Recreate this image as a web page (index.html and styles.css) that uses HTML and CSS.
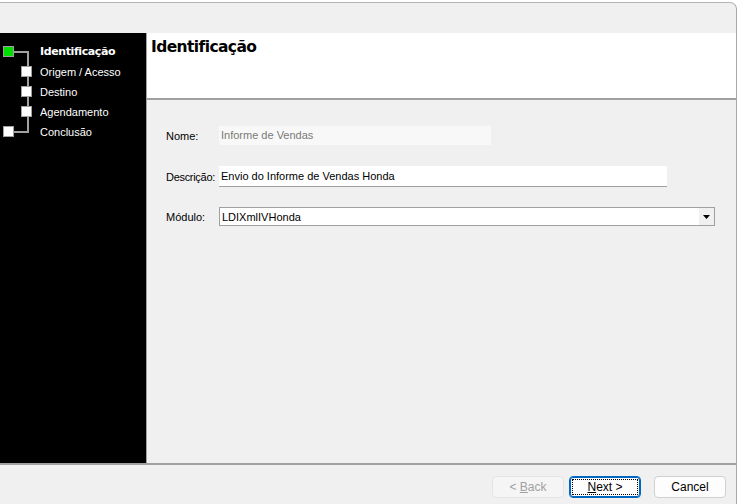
FILE: index.html
```html
<!DOCTYPE html>
<html>
<head>
<meta charset="utf-8">
<link rel="stylesheet" href="styles.css">
</head>
<body>
<div class="window">
  <div class="titlebar"></div>
  <div class="main">
    <aside class="sidebar">
      <svg class="tree" width="36" height="100" viewBox="0 0 36 100">
        <path d="M14 10 H28 V90 H14" fill="none" stroke="#a0a0a0" stroke-width="2"/>
        <rect x="3.5" y="4.5" width="10" height="10" fill="#00e000" stroke="#a0a0a0"/>
        <rect x="21.5" y="24.5" width="10" height="10" fill="#fff" stroke="#a0a0a0"/>
        <rect x="21.5" y="44.5" width="10" height="10" fill="#fff" stroke="#a0a0a0"/>
        <rect x="21.5" y="64.5" width="10" height="10" fill="#fff" stroke="#a0a0a0"/>
        <rect x="3.5" y="84.5" width="10" height="10" fill="#fff" stroke="#a0a0a0"/>
      </svg>
      <ul class="steps">
        <li class="active">Identificação</li>
        <li>Origem / Acesso</li>
        <li>Destino</li>
        <li>Agendamento</li>
        <li>Conclusão</li>
      </ul>
    </aside>
    <section class="content">
      <div class="header"><h1>Identificação</h1></div>
      <div class="form">
        <div class="row row-nome">
          <label>Nome:</label>
          <div class="field disabled">Informe de Vendas</div>
        </div>
        <div class="row row-desc">
          <label>Descrição:</label>
          <div class="field text">Envio do Informe de Vendas Honda</div>
        </div>
        <div class="row row-mod">
          <label>Módulo:</label>
          <div class="field combo"><span>LDIXmlIVHonda</span><span class="drop"><svg width="7" height="4" viewBox="0 0 7 4"><path d="M0 0H7L3.5 4Z" fill="#000"/></svg></span></div>
        </div>
      </div>
    </section>
  </div>
  <div class="footer">
    <button class="btn back" disabled>&lt; <u>B</u>ack</button>
    <button class="btn next"><span class="focus"><u>N</u>ext &gt;</span></button>
    <button class="btn cancel">Cancel</button>
  </div>
</div>
</body>
</html>
```
FILE: styles.css
```css
html, body {
  margin: 0;
  padding: 0;
  background: #ffffff;
}
body {
  width: 737px;
  height: 504px;
  overflow: hidden;
  font-family: "Liberation Sans", Arial, sans-serif;
  font-size: 11px;
  color: #000;
}
.window {
  margin-top: 2px;
  height: 502px;
  box-sizing: border-box;
  background: #f0f0f0;
  border-top: 1px solid #b4b4b4;
  border-right: 1px solid #a8a8a8;
  border-top-right-radius: 7px;
  display: flex;
  flex-direction: column;
}
.titlebar {
  height: 30px;
  flex: none;
}
.main {
  height: 432px;
  flex: none;
  display: flex;
  border-bottom: 2px solid #a0a0a0;
  box-sizing: border-box;
}
.sidebar {
  width: 147px;
  flex: none;
  box-sizing: border-box;
  background: #000;
  border-right: 1px solid #a0a0a0;
  display: flex;
  padding-top: 9px;
  align-items: flex-start;
}
.tree {
  display: block;
  flex: none;
  width: 36px;
  height: 100px;
  margin-right: 4px;
}
.steps {
  list-style: none;
  margin: 0;
  padding: 0;
  color: #fff;
  font-size: 11px;
}
.steps li {
  height: 20px;
  line-height: 20px;
}
.steps li.active {
  font-family: "DejaVu Sans", sans-serif;
  font-weight: bold;
  font-size: 11px;
  letter-spacing: -0.4px;
}
.content {
  flex: 1;
  display: flex;
  flex-direction: column;
}
.header {
  height: 67px;
  flex: none;
  background: #fff;
  border-bottom: 2px solid #a0a0a0;
  box-sizing: border-box;
  padding: 4px 4px;
}
.header h1 {
  margin: 0;
  font-family: "DejaVu Sans", sans-serif;
  font-size: 15.5px;
  font-weight: bold;
  letter-spacing: -0.6px;
  line-height: 20px;
}
.form {
  padding: 26px 0 0 19px;
  display: flex;
  flex-direction: column;
}
.row {
  display: flex;
  align-items: center;
}
.row label {
  width: 53px;
  flex: none;
  font-size: 11px;
  white-space: nowrap;
  color: #000;
}
.row-desc label { letter-spacing: -0.3px; }
.field {
  box-sizing: border-box;
  padding-left: 2px;
  font-size: 11px;
  white-space: nowrap;
}
.disabled {
  width: 272px;
  height: 19px;
  line-height: 19px;
  background: #f8f8f8;
  color: #7a7a7a;
}
.row-desc { margin-top: 21px; }
.text {
  width: 448px;
  height: 21px;
  line-height: 20px;
  background: #fff;
  border-bottom: 1px solid #a0a0a0;
}
.row-mod { margin-top: 20px; }
.combo {
  width: 496px;
  height: 19px;
  background: #fff;
  border: 1px solid #a0a0a0;
  display: flex;
  align-items: center;
  justify-content: space-between;
}
.drop {
  width: 15px;
  height: 17px;
  background: #f0f0f0;
  display: flex;
  align-items: center;
  justify-content: center;
}
.drop svg { display: block; }
.footer {
  flex: 1;
  display: flex;
  justify-content: flex-end;
  align-items: flex-start;
  padding: 11px 10px 0 0;
}
.btn {
  box-sizing: border-box;
  width: 72px;
  height: 22px;
  padding: 0;
  font-family: "Liberation Sans", Arial, sans-serif;
  font-size: 12px;
  background: #fdfdfd;
  border: 1px solid #d0d0d0;
  border-radius: 4px;
  color: #000;
}
.btn u { text-decoration: underline; }
.back {
  background: #f5f5f5;
  border-color: #e4e4e4;
  color: #a0a0a0;
}
.next {
  margin-left: 5px;
  border: 1px solid #0067c0;
  box-shadow: inset 0 0 0 1px #0067c0;
  padding: 2px;
}
.next .focus {
  display: flex;
  align-items: center;
  justify-content: center;
  height: 100%;
  border: 1px dotted #000;
  box-sizing: border-box;
}
.cancel {
  margin-left: 13px;
}
```
